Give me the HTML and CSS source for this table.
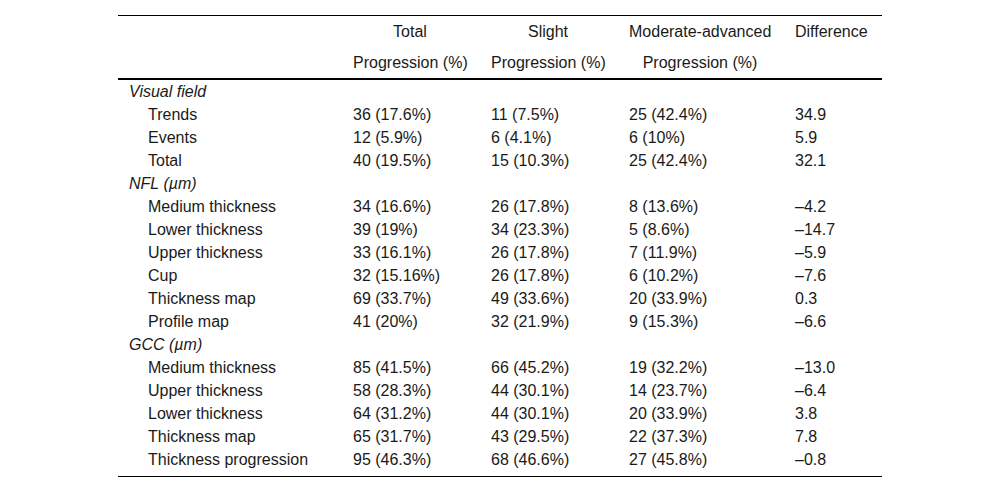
FILE: index.html
```html
<!DOCTYPE html>
<html>
<head>
<meta charset="utf-8">
<link rel="stylesheet" href="styles.css">
</head>
<body>
<div class="wrap">
<table class="tbl">
<colgroup>
<col class="c1"><col class="c2"><col class="c3"><col class="c4"><col class="c5">
</colgroup>
<thead>
<tr>
<th></th>
<th class="ctr">Total<br>Progression (%)</th>
<th class="ctr">Slight<br>Progression (%)</th>
<th class="ctr">Moderate-advanced<br>Progression (%)</th>
<th class="lft">Difference</th>
</tr>
</thead>
<tbody>
<tr><td class="sec" colspan="5">Visual field</td></tr>
<tr><td class="item">Trends</td><td>36 (17.6%)</td><td>11 (7.5%)</td><td>25 (42.4%)</td><td>34.9</td></tr>
<tr><td class="item">Events</td><td>12 (5.9%)</td><td>6 (4.1%)</td><td>6 (10%)</td><td>5.9</td></tr>
<tr><td class="item">Total</td><td>40 (19.5%)</td><td>15 (10.3%)</td><td>25 (42.4%)</td><td>32.1</td></tr>
<tr><td class="sec" colspan="5">NFL (µm)</td></tr>
<tr><td class="item">Medium thickness</td><td>34 (16.6%)</td><td>26 (17.8%)</td><td>8 (13.6%)</td><td>–4.2</td></tr>
<tr><td class="item">Lower thickness</td><td>39 (19%)</td><td>34 (23.3%)</td><td>5 (8.6%)</td><td>–14.7</td></tr>
<tr><td class="item">Upper thickness</td><td>33 (16.1%)</td><td>26 (17.8%)</td><td>7 (11.9%)</td><td>–5.9</td></tr>
<tr><td class="item">Cup</td><td>32 (15.16%)</td><td>26 (17.8%)</td><td>6 (10.2%)</td><td>–7.6</td></tr>
<tr><td class="item">Thickness map</td><td>69 (33.7%)</td><td>49 (33.6%)</td><td>20 (33.9%)</td><td>0.3</td></tr>
<tr><td class="item">Profile map</td><td>41 (20%)</td><td>32 (21.9%)</td><td>9 (15.3%)</td><td>–6.6</td></tr>
<tr><td class="sec" colspan="5">GCC (µm)</td></tr>
<tr><td class="item">Medium thickness</td><td>85 (41.5%)</td><td>66 (45.2%)</td><td>19 (32.2%)</td><td>–13.0</td></tr>
<tr><td class="item">Upper thickness</td><td>58 (28.3%)</td><td>44 (30.1%)</td><td>14 (23.7%)</td><td>–6.4</td></tr>
<tr><td class="item">Lower thickness</td><td>64 (31.2%)</td><td>44 (30.1%)</td><td>20 (33.9%)</td><td>3.8</td></tr>
<tr><td class="item">Thickness map</td><td>65 (31.7%)</td><td>43 (29.5%)</td><td>22 (37.3%)</td><td>7.8</td></tr>
<tr class="last"><td class="item">Thickness progression</td><td>95 (46.3%)</td><td>68 (46.6%)</td><td>27 (45.8%)</td><td>–0.8</td></tr>
</tbody>
</table>
</div>
</body>
</html>
```

FILE: styles.css
```css
html, body {
  margin: 0;
  padding: 0;
  background: #fff;
}
.wrap {
  padding: 15px 0 0 118px;
}
.tbl {
  width: 764px;
  table-layout: fixed;
  border-collapse: collapse;
  font-family: "Liberation Sans", Arial, sans-serif;
  font-size: 16px;
  color: #1a1a1a;
}
.c1 { width: 223px; }
.c2 { width: 138px; }
.c3 { width: 138px; }
.c4 { width: 166px; }
.c5 { width: 99px; }
.tbl thead tr {
  border-top: 1px solid #000;
  border-bottom: 2px solid #000;
}
.tbl th {
  font-weight: normal;
  line-height: 31px;
  vertical-align: top;
  padding: 0 12px;
  white-space: nowrap;
}
.tbl th.ctr { text-align: center; }
.tbl th.lft { text-align: left; }
.tbl td {
  line-height: 23px;
  padding: 0 12px;
  white-space: nowrap;
  text-align: left;
}
.tbl td.sec {
  font-style: italic;
  padding-left: 11px;
}
.tbl td.item {
  padding-left: 30px;
}
.tbl tbody tr.last td {
  padding-bottom: 5px;
}
.tbl tbody tr.last {
  border-bottom: 1px solid #000;
}
```
